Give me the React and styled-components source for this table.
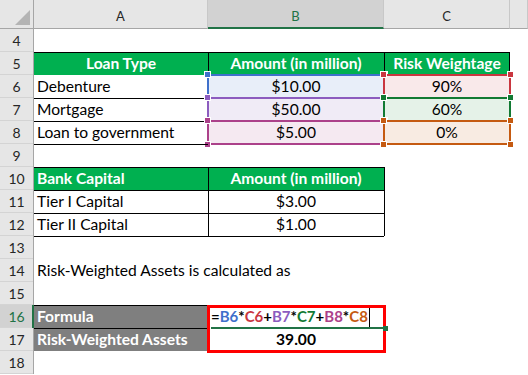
import React from "react";
import styled, { createGlobalStyle, css } from "styled-components";

const GlobalStyle = createGlobalStyle`
    html, body {
        margin: 0;
        padding: 0;
        background: #ffffff;
    }
    body {
        font-family: Lato, "Liberation Sans", sans-serif;
    }
`

const ref = {
    blue: { line: '#3f70cb', fill: '#e8eef9' },
    purple: { line: '#8c5cbf', fill: '#f0ebf6' },
    magenta: { line: '#ac418a', fill: '#f5e9f1' },
    red: { line: '#c9363f', fill: '#f9e9ea' },
    green: { line: '#127a33', fill: '#e5f2e8' },
    orange: { line: '#c55a11', fill: '#f8ebe2' },
}

const Sheet = styled.div`
    display: grid;
    grid-template-columns: 34px 174px 176px 126px 18px;
    grid-template-rows: 29px repeat(15, 23px);
    width: 528px;
    height: 375px;
    overflow: hidden;
    font-family: Lato, "Liberation Sans", sans-serif;
    font-size: 15.6px;
    color: #000000;
`
const Corner = styled.div`
    background: #e6e6e6;
    border-right: 1px solid #a6a6a6;
    border-bottom: 1px solid #a6a6a6;
    display: flex;
    justify-content: flex-end;
    align-items: flex-end;
    padding: 0 3px 3px 0;
`
const ColHead = styled.div`
    background: #e6e6e6;
    color: #262626;
    font-size: 13px;
    border-right: 1px solid #c8c8c8;
    border-bottom: 1px solid #a6a6a6;
    display: flex;
    justify-content: center;
    align-items: center;
    padding-top: 4px;

    ${({ $active }) => $active && css`
        background: #d2d2d2;
        color: #217346;
        border-bottom: 2px solid #217346;
    `}
`
const RowHead = styled.div`
    background: #e6e6e6;
    color: #262626;
    font-size: 14px;
    line-height: 23px;
    text-align: center;
    border-right: 1px solid #a6a6a6;
    box-shadow: inset 0 -1px 0 #d4d4d4;

    ${({ $active }) => $active && css`
        background: #d2d2d2;
        color: #217346;
        border-right: 2px solid #217346;
        padding-left: 1px;
    `}
`

const edges = ({ $top, $left, $right }) => {
    const list = [];
    if ($top) list.push('inset 0 1px 0 #000000');
    if ($left) list.push('inset 1px 0 0 #000000');
    if ($right) list.push('inset -1px 0 0 #000000');
    return list.length ? list.join(', ') : 'none';
}

const Cell = styled.div`
    position: relative;
    line-height: 23px;
    padding: 0 3px;
    white-space: nowrap;
    text-align: ${({ $align }) => $align || 'left'};
    font-weight: ${({ $bold }) => ($bold ? 700 : 400)};
    background: ${({ $fill }) => $fill || 'transparent'};
    color: ${({ $color }) => $color || '#000000'};
    box-shadow: ${edges};
`
const Head = styled(Cell).attrs({ $bold: true, $fill: '#00b050', $color: '#ffffff' })``
const Label = styled(Cell).attrs({ $bold: true, $fill: '#7f7f7f', $color: '#ffffff' })``

const RefCell = styled(Cell)`
    text-align: center;
    background: ${({ $tone }) => ref[$tone].fill};
`
const RefFrame = styled.span`
    position: absolute;
    inset: -1px;
    border: 2px solid ${({ $tone }) => ref[$tone].line};
    pointer-events: none;
`
const Handle = styled.span`
    position: absolute;
    width: 5px;
    height: 5px;
    background: ${({ $tone }) => ref[$tone].line};
    box-shadow: 0 0 0 1px #ffffff;
    ${({ $x }) => ($x === 'l' ? 'left: -4px;' : 'right: -4px;')}
    ${({ $y }) => ($y === 't' ? 'top: -4px;' : 'bottom: -4px;')}
`

const FormulaBox = styled.div`
    position: relative;
    grid-row: span 2;
    display: grid;
    grid-template-rows: 23px 23px;

    &::after {
        content: '';
        position: absolute;
        top: 0;
        left: -1px;
        right: -2px;
        bottom: -2px;
        border: 3px solid #ff0000;
        z-index: 2;
    }
`
const FormulaCell = styled(Cell)`
    font-weight: 700;
    font-size: 15px;
    padding-left: 3px;

    &::after {
        content: '';
        position: absolute;
        left: 3px;
        right: -2px;
        bottom: -1px;
        height: 2px;
        background: #217346;
        z-index: 1;
    }
`
const FillHandle = styled.span`
    position: absolute;
    right: -4px;
    bottom: -3px;
    width: 5px;
    height: 5px;
    background: #217346;
    z-index: 3;
`
const Token = styled.span`
    color: ${({ $tone }) => (ref[$tone] ? ref[$tone].line : '#000000')};
`
const Caret = styled.span`
    display: inline-block;
    width: 1px;
    height: 20px;
    margin-left: 1px;
    background: #000000;
    vertical-align: -5px;
`

const RefBox = ({ tone, children }) => (
    <RefCell $tone={tone}>
        {children}
        <RefFrame $tone={tone}>
            <Handle $tone={tone} $x="l" $y="t" />
            <Handle $tone={tone} $x="r" $y="t" />
            <Handle $tone={tone} $x="l" $y="b" />
            <Handle $tone={tone} $x="r" $y="b" />
        </RefFrame>
    </RefCell>
)

const formula = [
    ['=', null], ['B6', 'blue'], ['*', null], ['C6', 'red'], ['+', null],
    ['B7', 'purple'], ['*', null], ['C7', 'green'], ['+', null],
    ['B8', 'magenta'], ['*', null], ['C8', 'orange'],
]

const loans = [
    ['Debenture', '$10.00', '90%', 'blue', 'red'],
    ['Mortgage', '$50.00', '60%', 'purple', 'green'],
    ['Loan to government', '$5.00', '0%', 'magenta', 'orange'],
]
const capital = [
    ['Tier I Capital', '$3.00'],
    ['Tier II Capital', '$1.00'],
]

const App = () => {
    return (
        <>
            <GlobalStyle />
            <Sheet>
                <Corner>
                    <svg width="15" height="15" viewBox="0 0 15 15">
                        <polygon points="15,0 15,15 0,15" fill="#b4b4b4" />
                    </svg>
                </Corner>
                <ColHead>A</ColHead>
                <ColHead $active>B</ColHead>
                <ColHead>C</ColHead>
                <ColHead />

                <RowHead>4</RowHead>
                <Cell /><Cell /><Cell /><Cell />

                <RowHead>5</RowHead>
                <Head $top $align="center">Loan Type</Head>
                <Head $top $left $align="center">Amount (in million)</Head>
                <Head $top $left $right $align="center">Risk Weightage</Head>
                <Cell />

                {loans.map(([name, amount, weight, toneB, toneC], i) => (
                    <React.Fragment key={name}>
                        <RowHead>{6 + i}</RowHead>
                        <Cell $top={i > 0}>{name}</Cell>
                        <RefBox tone={toneB}>{amount}</RefBox>
                        <RefBox tone={toneC}>{weight}</RefBox>
                        <Cell />
                    </React.Fragment>
                ))}

                <RowHead>9</RowHead>
                <Cell $top /><Cell /><Cell /><Cell />

                <RowHead>10</RowHead>
                <Head $top>Bank Capital</Head>
                <Head $top $left $align="center">Amount (in million)</Head>
                <Cell $left /><Cell />

                {capital.map(([name, amount], i) => (
                    <React.Fragment key={name}>
                        <RowHead>{11 + i}</RowHead>
                        <Cell $top>{name}</Cell>
                        <Cell $top $left $align="center">{amount}</Cell>
                        <Cell $left />
                        <Cell />
                    </React.Fragment>
                ))}

                <RowHead>13</RowHead>
                <Cell $top /><Cell $top /><Cell /><Cell />

                <RowHead>14</RowHead>
                <Cell>Risk-Weighted Assets is calculated as</Cell>
                <Cell /><Cell /><Cell />

                <RowHead>15</RowHead>
                <Cell /><Cell /><Cell /><Cell />

                <RowHead $active>16</RowHead>
                <Label $top>Formula</Label>
                <FormulaBox>
                    <FormulaCell>
                        {formula.map(([t, tone], i) => (
                            <Token key={i} $tone={tone}>{t}</Token>
                        ))}
                        <Caret />
                        <FillHandle />
                    </FormulaCell>
                    <Cell $bold $align="center">39.00</Cell>
                </FormulaBox>
                <Cell /><Cell />

                <RowHead>17</RowHead>
                <Label $top>Risk-Weighted Assets</Label>
                <Cell /><Cell />

                <RowHead>18</RowHead>
                <Cell /><Cell /><Cell /><Cell />
            </Sheet>
        </>
    );
}
export default App;
